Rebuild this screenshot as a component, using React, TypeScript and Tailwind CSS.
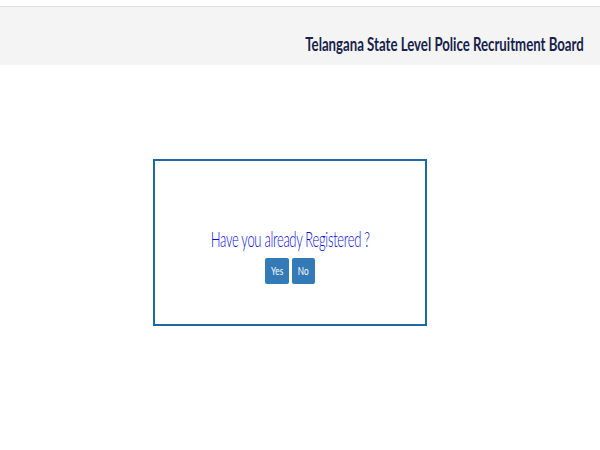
import React from "react";

export default function App() {
  return (
    <div className="w-[600px] h-[450px] bg-white pt-[6px]" style={{ fontFamily: "Lato, 'Open Sans', sans-serif" }}>
      <header className="h-[59px] border-t border-[#e0e0e0] bg-[#f4f4f4] flex justify-end items-end pr-[16px] pb-[10px]">
        <h1 className="text-[19px] leading-[22px] font-bold text-[#16224a] whitespace-nowrap origin-right scale-x-[0.695]">
          Telangana State Level Police Recruitment Board
        </h1>
      </header>
      <div className="ml-[153px] mt-[94px] w-[274px] h-[167px] border-2 border-[#1b6aa5] flex flex-col items-center pt-[65px]">
        <p className="text-[21px] leading-[26px] font-light text-[#0a0ad8] whitespace-nowrap scale-x-[0.62] tracking-[-0.5px]">
          Have you already Registered ?
        </p>
        <div className="flex gap-[3px] mt-[6px]">
          <button className="w-[24px] h-[26px] bg-[#337ab7] text-white text-[11px] rounded-[2px] flex items-center justify-center">
            <span className="scale-x-[0.75]">Yes</span>
          </button>
          <button className="w-[23px] h-[26px] bg-[#337ab7] text-white text-[11px] rounded-[2px] flex items-center justify-center">
            <span className="scale-x-[0.75]">No</span>
          </button>
        </div>
      </div>
    </div>
  );
}
